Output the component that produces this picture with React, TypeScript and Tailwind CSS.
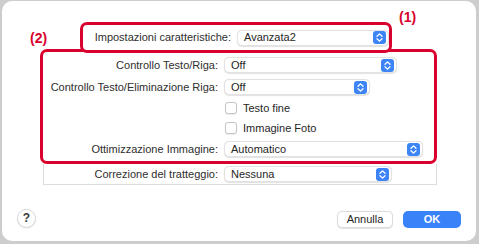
import React from 'react'

const font = { fontFamily: '"Liberation Sans", Arial, sans-serif' }

function Stepper() {
  return (
    <svg width="13" height="13" viewBox="0 0 13 13" className="shrink-0">
      <rect x="0" y="0" width="13" height="13" rx="3" fill="#3d84f7" />
      <path d="M4 5.3 L6.5 2.9 L9 5.3" fill="none" stroke="#fff" strokeWidth="1.3" strokeLinecap="round" strokeLinejoin="round" />
      <path d="M4 7.7 L6.5 10.1 L9 7.7" fill="none" stroke="#fff" strokeWidth="1.3" strokeLinecap="round" strokeLinejoin="round" />
    </svg>
  )
}

function Select({ value, width }: { value: string; width: string }) {
  return (
    <div
      className={`${width} h-[16px] flex items-center justify-between pl-[6px] pr-[2px] bg-white rounded-[5px] border border-[#e2e2e2] shadow-[0_0.5px_1px_rgba(0,0,0,0.12)] text-[11px] text-[#262626]`}
    >
      <span>{value}</span>
      <Stepper />
    </div>
  )
}

function Row({ label, labelW, children, h = 'h-[22px]' }: { label?: string; labelW: string; children: React.ReactNode; h?: string }) {
  return (
    <div className={`flex items-center ${h}`}>
      <div className={`${labelW} shrink-0 whitespace-nowrap text-right text-[11px] text-[#2e2e2e] pr-[6px]`}>{label}</div>
      {children}
    </div>
  )
}

function Check({ label }: { label: string }) {
  return (
    <div className="flex items-center gap-[6px] text-[11px] text-[#262626]">
      <div className="w-[12px] h-[12px] rounded-[3px] bg-white border border-[#c4c4c4] shadow-[0_0.5px_1px_rgba(0,0,0,0.08)]" />
      <span>{label}</span>
    </div>
  )
}

export default function App() {
  return (
    <div className="w-[479px] h-[244px] bg-[#cdcdcd] pt-[1px] pl-[2px] pr-[3px] pb-[3px]" style={font}>
      <div className="relative w-full h-full bg-white rounded-[10px] overflow-hidden">
        {/* annotation labels */}
        <div className="absolute left-[397px] top-[6px] text-[14px] font-bold text-[#d9002e]">(1)</div>
        <div className="absolute left-[28px] top-[27px] text-[14px] font-bold text-[#d9002e]">(2)</div>

        {/* box (1) */}
        <div className="relative z-20 ml-[78px] mt-[21px] w-[312px] h-[31px] border-[3px] border-[#d9002e] rounded-[7px] bg-white flex items-center">
          <Row label="Impostazioni caratteristiche:" labelW="w-[154px]">
            <Select value="Avanzata2" width="w-[152px]" />
          </Row>
        </div>

        {/* box (2) */}
        <div className="relative z-10 ml-[38px] -mt-[4px] w-[397px] h-[115px] border-[3px] border-[#d9002e] rounded-[7px] bg-white pt-[2px]">
          <Row label="Controllo Testo/Riga:" labelW="w-[181px]">
            <Select value="Off" width="w-[173px]" />
          </Row>
          <Row label="Controllo Testo/Eliminazione Riga:" labelW="w-[181px]">
            <Select value="Off" width="w-[146px]" />
          </Row>
          <Row labelW="w-[182px]" h="h-[20px]">
            <Check label="Testo fine" />
          </Row>
          <Row labelW="w-[182px]" h="h-[20px]">
            <Check label="Immagine Foto" />
          </Row>
          <Row label="Ottimizzazione Immagine:" labelW="w-[181px]">
            <Select value="Automatico" width="w-[199px]" />
          </Row>
        </div>

        {/* group box below */}
        <div className="ml-[41px] w-[394px] h-[21px] border-x border-b border-[#dcdcdc] flex items-center">
          <Row label="Correzione del tratteggio:" labelW="w-[180px]" h="h-[20px]">
            <Select value="Nessuna" width="w-[168px]" />
          </Row>
        </div>

        {/* footer */}
        <div className="flex items-center justify-between mt-[23px] pl-[15px] pr-[15px]">
          <div className="w-[19px] h-[19px] rounded-full bg-white border border-[#dadada] shadow-[0_0.5px_1px_rgba(0,0,0,0.1)] flex items-center justify-center text-[12px] font-semibold text-[#3a3a3a]">
            ?
          </div>
          <div className="flex items-center gap-[10px] pt-[3px]">
            <div className="w-[56px] h-[17px] rounded-[5px] bg-white border border-[#dcdcdc] shadow-[0_0.5px_1px_rgba(0,0,0,0.12)] flex items-center justify-center text-[11px] text-[#262626]">
              Annulla
            </div>
            <div className="w-[58px] h-[17px] rounded-[5px] bg-[#3a82f7] flex items-center justify-center text-[11px] font-bold text-white">
              OK
            </div>
          </div>
        </div>
      </div>
    </div>
  )
}
